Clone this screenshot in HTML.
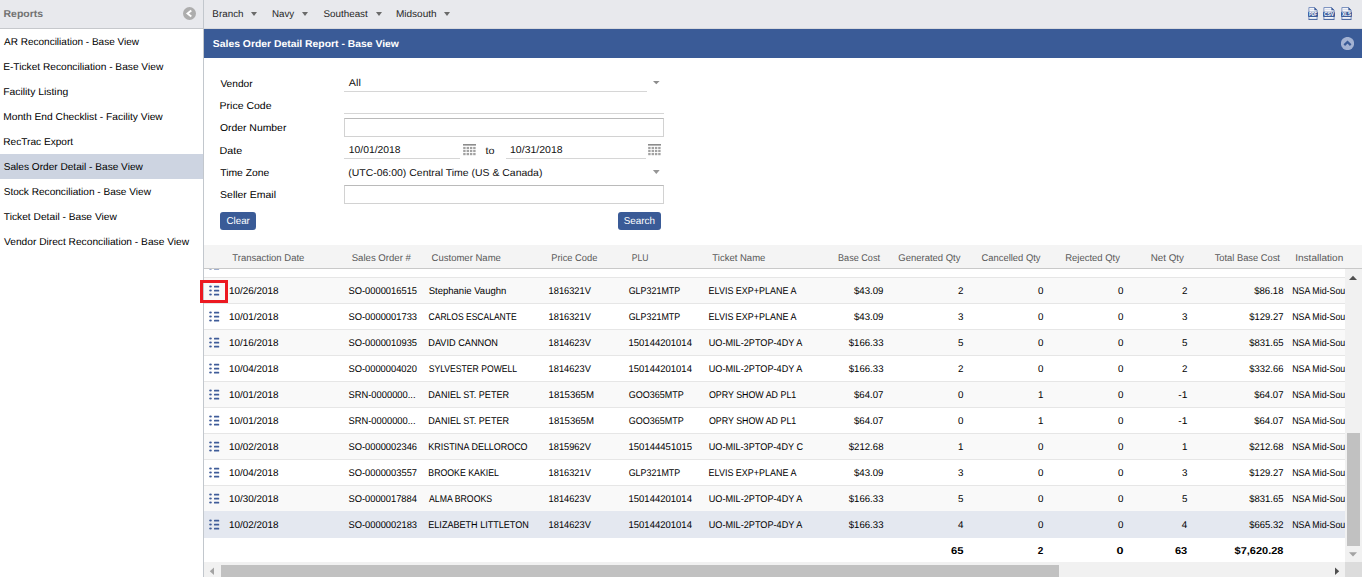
<!DOCTYPE html>
<html><head><meta charset="utf-8">
<style>
*{margin:0;padding:0;box-sizing:border-box}
html,body{width:1362px;height:577px;overflow:hidden;background:#fff;font-family:"Liberation Sans",sans-serif;color:#000}
.a{position:absolute}
#sidehdr{position:absolute;left:0;top:0;width:203px;height:28px;background:#e8e9ed}
#sideline{position:absolute;left:0;top:28px;width:203px;height:1px;background:#c6c8cc}
#sel{position:absolute;left:0;top:154px;width:203px;height:25px;background:#cdd4e1}
#vline{position:absolute;left:203px;top:0;width:1px;height:577px;background:#c2c7cd}
#top{position:absolute;left:204px;top:0;width:1158px;height:29px;background:#e8e9ed;border-bottom:1px solid #d8d9dd}
#blue{position:absolute;left:204px;top:29px;width:1158px;height:29px;background:#3a5b97}
.dd{position:absolute;width:0;height:0;border-left:3px solid transparent;border-right:3px solid transparent;border-top:4px solid #6a6a6a}
.ul{position:absolute;height:1px;background:#d6d6d6}
.box{position:absolute;border:1px solid #d2d2d2;border-top-color:#bababa;background:#fff}
.btn{position:absolute;background:#3a5b97;border-radius:3px;height:18px}
#thead{position:absolute;left:204px;top:245px;width:1158px;height:23px;background:#f4f4f4}
#theadline{position:absolute;left:204px;top:268px;width:1158px;height:1px;background:#c9c9c9}
#tbody{position:absolute;left:204px;top:269px;width:1141px;height:293px;overflow:hidden;background:#fff}
.tr{position:absolute;left:0;width:1141px;height:26px;border-top:1px solid #e6e6e6}
.tr.g{background:#f9f9f9}
.tr.w{background:#fff}
.tr.hl{background:#e4e8f0;border-top-color:#e4e8f0;height:27px}
.ic{position:absolute}
#redbox{position:absolute;left:200px;top:280px;width:28px;height:23px;border:3px solid #ec1921}
#vscroll{position:absolute;left:1345px;top:269px;width:17px;height:293px;background:#f1f1f1}
#vthumb{position:absolute;left:1347px;top:433px;width:13px;height:113px;background:#c1c1c1}
#hscroll{position:absolute;left:204px;top:562px;width:1141px;height:15px;background:#f1f1f1}
#hthumb{position:absolute;left:221px;top:565px;width:838px;height:12px;background:#c1c1c1}
#corner{position:absolute;left:1345px;top:562px;width:17px;height:15px;background:#dcdcdc}
#txt{position:absolute;left:0;top:0}
</style></head><body>
<div id="sidehdr"></div>
<svg class="a" style="left:183px;top:7px" width="13" height="13" viewBox="0 0 13 13"><circle cx="6.5" cy="6.5" r="6.5" fill="#adadad"/><path d="M8.3 3.5 L4.5 6.5 L8.3 9.5" fill="none" stroke="#fff" stroke-width="1.9"/></svg>
<div id="sideline"></div>
<div id="sel"></div>
<div id="vline"></div>
<div id="top"></div>
<div class="dd" style="left:251px;top:12px"></div>
<div class="dd" style="left:302px;top:12px"></div>
<div class="dd" style="left:376px;top:12px"></div>
<div class="dd" style="left:444px;top:12px"></div>
<svg class="a" style="left:1300px;top:0px" width="62" height="28" viewBox="1300 0 62 28"><path d="M1308.9 19.5 V7.5 H1314.3 L1317.1 10.2 V19.5" fill="#f3f4f8" stroke="#7189bb" stroke-width="0.9"/><path d="M1314.3 7 V10.3 H1317.5 Z" fill="#3e5d9b"/><line x1="1309.9" y1="9.5" x2="1313.8" y2="9.5" stroke="#d5dbe8" stroke-width="0.8"/><rect x="1308" y="11.7" width="10" height="5.3" rx="0.9" fill="#3e5d9b"/><text x="1309.0" y="16.2" font-family="Liberation Sans" font-weight="bold" font-size="5.6" fill="#fff" textLength="8.0" lengthAdjust="spacingAndGlyphs">PDF</text><line x1="1308.6" y1="19.4" x2="1317.4" y2="19.4" stroke="#3e5d9b" stroke-width="1"/><path d="M1323.9 19.5 V7.5 H1331.3 L1334.1 10.2 V19.5" fill="#f3f4f8" stroke="#7189bb" stroke-width="0.9"/><path d="M1331.3 7 V10.3 H1334.5 Z" fill="#3e5d9b"/><line x1="1324.9" y1="9.5" x2="1330.8" y2="9.5" stroke="#d5dbe8" stroke-width="0.8"/><rect x="1323" y="11.7" width="12" height="5.3" rx="0.9" fill="#3e5d9b"/><text x="1324.0" y="16.2" font-family="Liberation Sans" font-weight="bold" font-size="5.6" fill="#fff" textLength="10.0" lengthAdjust="spacingAndGlyphs">CSV</text><line x1="1323.6" y1="19.4" x2="1334.4" y2="19.4" stroke="#3e5d9b" stroke-width="1"/><path d="M1341.9 19.5 V7.5 H1348.3 L1351.1 10.2 V19.5" fill="#f3f4f8" stroke="#7189bb" stroke-width="0.9"/><path d="M1348.3 7 V10.3 H1351.5 Z" fill="#3e5d9b"/><line x1="1342.9" y1="9.5" x2="1347.8" y2="9.5" stroke="#d5dbe8" stroke-width="0.8"/><rect x="1341" y="11.7" width="11" height="5.3" rx="0.9" fill="#3e5d9b"/><text x="1342.0" y="16.2" font-family="Liberation Sans" font-weight="bold" font-size="5.6" fill="#fff" textLength="9.0" lengthAdjust="spacingAndGlyphs">XLS</text><line x1="1341.6" y1="19.4" x2="1351.4" y2="19.4" stroke="#3e5d9b" stroke-width="1"/></svg>
<div id="blue"></div>
<svg class="a" style="left:1341px;top:37px" width="13" height="13" viewBox="0 0 13 13"><circle cx="6.5" cy="6.5" r="6.6" fill="#a4b3d3"/><path d="M3.3 8.1 L6.5 5.0 L9.7 8.1" fill="none" stroke="#3a5b97" stroke-width="2.2"/></svg>
<div class="ul" style="left:344px;top:91px;width:303px"></div>
<svg class="a" style="left:652px;top:80px" width="9" height="6" viewBox="0 0 9 6"><path d="M1 1 H7.6 L4.3 4.2 Z" fill="#8c8c8c"/></svg>
<div class="ul" style="left:344px;top:113px;width:320px"></div>
<div class="box" style="left:344px;top:118px;width:320px;height:19px"></div>
<div class="ul" style="left:344px;top:158px;width:116px"></div>
<svg class="a" style="left:463px;top:144px" width="13" height="12" viewBox="0 0 13 12"><rect x="0" y="0" width="13" height="1.6" fill="#8c8c8c"/><rect x="0.2" y="2.9" width="2.4" height="2.2" fill="#a2a2a2"/><rect x="3.6" y="2.9" width="2.4" height="2.2" fill="#a2a2a2"/><rect x="6.9" y="2.9" width="2.4" height="2.2" fill="#a2a2a2"/><rect x="10.2" y="2.9" width="2.4" height="2.2" fill="#a2a2a2"/><rect x="0.2" y="5.9" width="2.4" height="2.2" fill="#a2a2a2"/><rect x="3.6" y="5.9" width="2.4" height="2.2" fill="#a2a2a2"/><rect x="6.9" y="5.9" width="2.4" height="2.2" fill="#a2a2a2"/><rect x="10.2" y="5.9" width="2.4" height="2.2" fill="#a2a2a2"/><rect x="0.2" y="9.0" width="2.4" height="2.2" fill="#a2a2a2"/><rect x="3.6" y="9.0" width="2.4" height="2.2" fill="#a2a2a2"/><rect x="6.9" y="9.0" width="2.4" height="2.2" fill="#a2a2a2"/><rect x="10.2" y="9.0" width="2.4" height="2.2" fill="#a2a2a2"/></svg>
<div class="ul" style="left:506px;top:158px;width:140px"></div>
<svg class="a" style="left:648px;top:144px" width="13" height="12" viewBox="0 0 13 12"><rect x="0" y="0" width="13" height="1.6" fill="#8c8c8c"/><rect x="0.2" y="2.9" width="2.4" height="2.2" fill="#a2a2a2"/><rect x="3.6" y="2.9" width="2.4" height="2.2" fill="#a2a2a2"/><rect x="6.9" y="2.9" width="2.4" height="2.2" fill="#a2a2a2"/><rect x="10.2" y="2.9" width="2.4" height="2.2" fill="#a2a2a2"/><rect x="0.2" y="5.9" width="2.4" height="2.2" fill="#a2a2a2"/><rect x="3.6" y="5.9" width="2.4" height="2.2" fill="#a2a2a2"/><rect x="6.9" y="5.9" width="2.4" height="2.2" fill="#a2a2a2"/><rect x="10.2" y="5.9" width="2.4" height="2.2" fill="#a2a2a2"/><rect x="0.2" y="9.0" width="2.4" height="2.2" fill="#a2a2a2"/><rect x="3.6" y="9.0" width="2.4" height="2.2" fill="#a2a2a2"/><rect x="6.9" y="9.0" width="2.4" height="2.2" fill="#a2a2a2"/><rect x="10.2" y="9.0" width="2.4" height="2.2" fill="#a2a2a2"/></svg>
<svg class="a" style="left:652px;top:169px" width="9" height="7" viewBox="0 0 9 7"><path d="M0.9 1 H7.7 L4.3 5 Z" fill="#969696"/></svg>
<div class="box" style="left:344px;top:185px;width:320px;height:19px"></div>
<div class="btn" style="left:220px;top:212px;width:36px"></div>
<div class="btn" style="left:618px;top:212px;width:43px"></div>
<div id="thead"></div><div id="theadline"></div>
<div id="tbody">
<div class="tr w" style="top:-18px"></div>
<svg class="ic" style="left:5px;top:-10px" width="12" height="12" viewBox="0 0 12 12"><ellipse cx="1.5" cy="1.6" rx="1.35" ry="1.0" fill="#3f5c99"/><rect x="5" y="0.7" width="5.2" height="1.8" rx="0.5" fill="#3f5c99"/><ellipse cx="1.5" cy="5.6" rx="1.35" ry="1.0" fill="#3f5c99"/><rect x="5" y="4.7" width="5.2" height="1.8" rx="0.5" fill="#3f5c99"/><ellipse cx="1.5" cy="9.6" rx="1.35" ry="1.0" fill="#3f5c99"/><rect x="5" y="8.7" width="5.2" height="1.8" rx="0.5" fill="#3f5c99"/></svg>
<div class="tr g" style="top:8px"></div>
<svg class="ic" style="left:5px;top:16px" width="12" height="12" viewBox="0 0 12 12"><ellipse cx="1.5" cy="1.6" rx="1.35" ry="1.0" fill="#3f5c99"/><rect x="5" y="0.7" width="5.2" height="1.8" rx="0.5" fill="#3f5c99"/><ellipse cx="1.5" cy="5.6" rx="1.35" ry="1.0" fill="#3f5c99"/><rect x="5" y="4.7" width="5.2" height="1.8" rx="0.5" fill="#3f5c99"/><ellipse cx="1.5" cy="9.6" rx="1.35" ry="1.0" fill="#3f5c99"/><rect x="5" y="8.7" width="5.2" height="1.8" rx="0.5" fill="#3f5c99"/></svg>
<div class="tr w" style="top:34px"></div>
<svg class="ic" style="left:5px;top:42px" width="12" height="12" viewBox="0 0 12 12"><ellipse cx="1.5" cy="1.6" rx="1.35" ry="1.0" fill="#3f5c99"/><rect x="5" y="0.7" width="5.2" height="1.8" rx="0.5" fill="#3f5c99"/><ellipse cx="1.5" cy="5.6" rx="1.35" ry="1.0" fill="#3f5c99"/><rect x="5" y="4.7" width="5.2" height="1.8" rx="0.5" fill="#3f5c99"/><ellipse cx="1.5" cy="9.6" rx="1.35" ry="1.0" fill="#3f5c99"/><rect x="5" y="8.7" width="5.2" height="1.8" rx="0.5" fill="#3f5c99"/></svg>
<div class="tr g" style="top:60px"></div>
<svg class="ic" style="left:5px;top:68px" width="12" height="12" viewBox="0 0 12 12"><ellipse cx="1.5" cy="1.6" rx="1.35" ry="1.0" fill="#3f5c99"/><rect x="5" y="0.7" width="5.2" height="1.8" rx="0.5" fill="#3f5c99"/><ellipse cx="1.5" cy="5.6" rx="1.35" ry="1.0" fill="#3f5c99"/><rect x="5" y="4.7" width="5.2" height="1.8" rx="0.5" fill="#3f5c99"/><ellipse cx="1.5" cy="9.6" rx="1.35" ry="1.0" fill="#3f5c99"/><rect x="5" y="8.7" width="5.2" height="1.8" rx="0.5" fill="#3f5c99"/></svg>
<div class="tr w" style="top:86px"></div>
<svg class="ic" style="left:5px;top:94px" width="12" height="12" viewBox="0 0 12 12"><ellipse cx="1.5" cy="1.6" rx="1.35" ry="1.0" fill="#3f5c99"/><rect x="5" y="0.7" width="5.2" height="1.8" rx="0.5" fill="#3f5c99"/><ellipse cx="1.5" cy="5.6" rx="1.35" ry="1.0" fill="#3f5c99"/><rect x="5" y="4.7" width="5.2" height="1.8" rx="0.5" fill="#3f5c99"/><ellipse cx="1.5" cy="9.6" rx="1.35" ry="1.0" fill="#3f5c99"/><rect x="5" y="8.7" width="5.2" height="1.8" rx="0.5" fill="#3f5c99"/></svg>
<div class="tr g" style="top:112px"></div>
<svg class="ic" style="left:5px;top:120px" width="12" height="12" viewBox="0 0 12 12"><ellipse cx="1.5" cy="1.6" rx="1.35" ry="1.0" fill="#3f5c99"/><rect x="5" y="0.7" width="5.2" height="1.8" rx="0.5" fill="#3f5c99"/><ellipse cx="1.5" cy="5.6" rx="1.35" ry="1.0" fill="#3f5c99"/><rect x="5" y="4.7" width="5.2" height="1.8" rx="0.5" fill="#3f5c99"/><ellipse cx="1.5" cy="9.6" rx="1.35" ry="1.0" fill="#3f5c99"/><rect x="5" y="8.7" width="5.2" height="1.8" rx="0.5" fill="#3f5c99"/></svg>
<div class="tr w" style="top:138px"></div>
<svg class="ic" style="left:5px;top:146px" width="12" height="12" viewBox="0 0 12 12"><ellipse cx="1.5" cy="1.6" rx="1.35" ry="1.0" fill="#3f5c99"/><rect x="5" y="0.7" width="5.2" height="1.8" rx="0.5" fill="#3f5c99"/><ellipse cx="1.5" cy="5.6" rx="1.35" ry="1.0" fill="#3f5c99"/><rect x="5" y="4.7" width="5.2" height="1.8" rx="0.5" fill="#3f5c99"/><ellipse cx="1.5" cy="9.6" rx="1.35" ry="1.0" fill="#3f5c99"/><rect x="5" y="8.7" width="5.2" height="1.8" rx="0.5" fill="#3f5c99"/></svg>
<div class="tr g" style="top:164px"></div>
<svg class="ic" style="left:5px;top:172px" width="12" height="12" viewBox="0 0 12 12"><ellipse cx="1.5" cy="1.6" rx="1.35" ry="1.0" fill="#3f5c99"/><rect x="5" y="0.7" width="5.2" height="1.8" rx="0.5" fill="#3f5c99"/><ellipse cx="1.5" cy="5.6" rx="1.35" ry="1.0" fill="#3f5c99"/><rect x="5" y="4.7" width="5.2" height="1.8" rx="0.5" fill="#3f5c99"/><ellipse cx="1.5" cy="9.6" rx="1.35" ry="1.0" fill="#3f5c99"/><rect x="5" y="8.7" width="5.2" height="1.8" rx="0.5" fill="#3f5c99"/></svg>
<div class="tr w" style="top:190px"></div>
<svg class="ic" style="left:5px;top:198px" width="12" height="12" viewBox="0 0 12 12"><ellipse cx="1.5" cy="1.6" rx="1.35" ry="1.0" fill="#3f5c99"/><rect x="5" y="0.7" width="5.2" height="1.8" rx="0.5" fill="#3f5c99"/><ellipse cx="1.5" cy="5.6" rx="1.35" ry="1.0" fill="#3f5c99"/><rect x="5" y="4.7" width="5.2" height="1.8" rx="0.5" fill="#3f5c99"/><ellipse cx="1.5" cy="9.6" rx="1.35" ry="1.0" fill="#3f5c99"/><rect x="5" y="8.7" width="5.2" height="1.8" rx="0.5" fill="#3f5c99"/></svg>
<div class="tr g" style="top:216px"></div>
<svg class="ic" style="left:5px;top:224px" width="12" height="12" viewBox="0 0 12 12"><ellipse cx="1.5" cy="1.6" rx="1.35" ry="1.0" fill="#3f5c99"/><rect x="5" y="0.7" width="5.2" height="1.8" rx="0.5" fill="#3f5c99"/><ellipse cx="1.5" cy="5.6" rx="1.35" ry="1.0" fill="#3f5c99"/><rect x="5" y="4.7" width="5.2" height="1.8" rx="0.5" fill="#3f5c99"/><ellipse cx="1.5" cy="9.6" rx="1.35" ry="1.0" fill="#3f5c99"/><rect x="5" y="8.7" width="5.2" height="1.8" rx="0.5" fill="#3f5c99"/></svg>
<div class="tr hl" style="top:242px"></div>
<svg class="ic" style="left:5px;top:250px" width="12" height="12" viewBox="0 0 12 12"><ellipse cx="1.5" cy="1.6" rx="1.35" ry="1.0" fill="#3f5c99"/><rect x="5" y="0.7" width="5.2" height="1.8" rx="0.5" fill="#3f5c99"/><ellipse cx="1.5" cy="5.6" rx="1.35" ry="1.0" fill="#3f5c99"/><rect x="5" y="4.7" width="5.2" height="1.8" rx="0.5" fill="#3f5c99"/><ellipse cx="1.5" cy="9.6" rx="1.35" ry="1.0" fill="#3f5c99"/><rect x="5" y="8.7" width="5.2" height="1.8" rx="0.5" fill="#3f5c99"/></svg>
</div>
<div id="redbox"></div>
<svg id="txt" width="1362" height="577" viewBox="0 0 1362 577" font-family="Liberation Sans" font-size="10" text-rendering="geometricPrecision" xml:space="preserve"><defs><clipPath id="tbc"><rect x="204" y="269" width="1141" height="293"/></clipPath></defs>
<text x="4.00" y="45.00" textLength="135.08" lengthAdjust="spacingAndGlyphs">AR Reconciliation - Base View</text>
<text x="3.20" y="70.00" textLength="160.07" lengthAdjust="spacingAndGlyphs">E-Ticket Reconciliation - Base View</text>
<text x="3.19" y="95.00" textLength="64.99" lengthAdjust="spacingAndGlyphs">Facility Listing</text>
<text x="3.20" y="120.00" textLength="159.57" lengthAdjust="spacingAndGlyphs">Month End Checklist - Facility View</text>
<text x="3.21" y="145.00" textLength="69.96" lengthAdjust="spacingAndGlyphs">RecTrac Export</text>
<text x="3.68" y="170.00" textLength="139.19" lengthAdjust="spacingAndGlyphs">Sales Order Detail - Base View</text>
<text x="3.68" y="195.00" textLength="147.29" lengthAdjust="spacingAndGlyphs">Stock Reconciliation - Base View</text>
<text x="3.84" y="220.00" textLength="113.03" lengthAdjust="spacingAndGlyphs">Ticket Detail - Base View</text>
<text x="4.00" y="245.00" textLength="185.08" lengthAdjust="spacingAndGlyphs">Vendor Direct Reconciliation - Base View</text>
<text x="3.55" y="17.00" textLength="39.58" lengthAdjust="spacingAndGlyphs" font-weight="bold" fill="#727272">Reports</text>
<text x="212.33" y="17.00" textLength="31.22" lengthAdjust="spacingAndGlyphs" font-size="9.8" fill="#262626">Branch</text>
<text x="271.94" y="17.00" textLength="22.26" lengthAdjust="spacingAndGlyphs" font-size="9.8" fill="#262626">Navy</text>
<text x="323.49" y="17.00" textLength="44.27" lengthAdjust="spacingAndGlyphs" font-size="9.8" fill="#262626">Southeast</text>
<text x="395.92" y="17.00" textLength="40.75" lengthAdjust="spacingAndGlyphs" font-size="9.8" fill="#262626">Midsouth</text>
<text x="212.84" y="47.00" textLength="186.03" lengthAdjust="spacingAndGlyphs" font-weight="bold" fill="#fff">Sales Order Detail Report - Base View</text>
<text x="220.40" y="87.00" textLength="32.25" lengthAdjust="spacingAndGlyphs">Vendor</text>
<text x="219.58" y="109.00" textLength="51.95" lengthAdjust="spacingAndGlyphs">Price Code</text>
<text x="219.91" y="131.00" textLength="66.44" lengthAdjust="spacingAndGlyphs">Order Number</text>
<text x="219.56" y="154.00" textLength="22.67" lengthAdjust="spacingAndGlyphs">Date</text>
<text x="220.24" y="176.00" textLength="49.08" lengthAdjust="spacingAndGlyphs">Time Zone</text>
<text x="220.07" y="198.00" textLength="55.92" lengthAdjust="spacingAndGlyphs">Seller Email</text>
<text x="348.85" y="86.00" textLength="11.96" lengthAdjust="spacingAndGlyphs" fill="#111">All</text>
<text x="348.85" y="153.00" textLength="51.77" lengthAdjust="spacingAndGlyphs" fill="#111">10/01/2018</text>
<text x="485.40" y="154.00" textLength="9.04" lengthAdjust="spacingAndGlyphs" fill="#111">to</text>
<text x="510.04" y="153.00" textLength="52.58" lengthAdjust="spacingAndGlyphs" fill="#111">10/31/2018</text>
<text x="348.21" y="176.00" textLength="194.23" lengthAdjust="spacingAndGlyphs" fill="#111">(UTC-06:00) Central Time (US &amp; Canada)</text>
<text x="226.44" y="224.00" textLength="23.41" lengthAdjust="spacingAndGlyphs" fill="#fff">Clear</text>
<text x="623.69" y="224.00" textLength="31.26" lengthAdjust="spacingAndGlyphs" fill="#fff">Search</text>
<text x="232.35" y="261.00" textLength="72.03" lengthAdjust="spacingAndGlyphs" font-size="9.8" fill="#595959">Transaction Date</text>
<text x="351.70" y="261.00" textLength="59.24" lengthAdjust="spacingAndGlyphs" font-size="9.8" fill="#595959">Sales Order #</text>
<text x="431.55" y="261.00" textLength="69.33" lengthAdjust="spacingAndGlyphs" font-size="9.8" fill="#595959">Customer Name</text>
<text x="551.27" y="261.00" textLength="46.11" lengthAdjust="spacingAndGlyphs" font-size="9.8" fill="#595959">Price Code</text>
<text x="631.83" y="261.00" textLength="16.74" lengthAdjust="spacingAndGlyphs" font-size="9.8" fill="#595959">PLU</text>
<text x="712.35" y="261.00" textLength="53.03" lengthAdjust="spacingAndGlyphs" font-size="9.8" fill="#595959">Ticket Name</text>
<text x="838.04" y="261.00" textLength="41.93" lengthAdjust="spacingAndGlyphs" font-size="9.8" fill="#595959">Base Cost</text>
<text x="898.31" y="261.00" textLength="62.19" lengthAdjust="spacingAndGlyphs" font-size="9.8" fill="#595959">Generated Qty</text>
<text x="981.56" y="261.00" textLength="58.94" lengthAdjust="spacingAndGlyphs" font-size="9.8" fill="#595959">Cancelled Qty</text>
<text x="1065.26" y="261.00" textLength="54.74" lengthAdjust="spacingAndGlyphs" font-size="9.8" fill="#595959">Rejected Qty</text>
<text x="1150.73" y="261.00" textLength="33.27" lengthAdjust="spacingAndGlyphs" font-size="9.8" fill="#595959">Net Qty</text>
<text x="1214.65" y="261.00" textLength="65.31" lengthAdjust="spacingAndGlyphs" font-size="9.8" fill="#595959">Total Base Cost</text>
<text x="1295.21" y="261.00" textLength="48.05" lengthAdjust="spacingAndGlyphs" font-size="9.8" fill="#595959">Installation</text>
<text x="950.95" y="554.00" textLength="12.53" lengthAdjust="spacingAndGlyphs" font-weight="bold">65</text>
<text x="1037.79" y="554.00" textLength="5.56" lengthAdjust="spacingAndGlyphs" font-weight="bold">2</text>
<text x="1116.61" y="554.00" textLength="7.00" lengthAdjust="spacingAndGlyphs" font-weight="bold">0</text>
<text x="1174.95" y="554.00" textLength="12.32" lengthAdjust="spacingAndGlyphs" font-weight="bold">63</text>
<text x="1234.60" y="554.00" textLength="48.87" lengthAdjust="spacingAndGlyphs" font-weight="bold">$7,620.28</text>
<g clip-path="url(#tbc)">
<text x="228.98" y="268.00" textLength="49.42" lengthAdjust="spacingAndGlyphs" font-size="9.8">10/02/2018</text>
<text x="348.41" y="268.00" textLength="68.67" lengthAdjust="spacingAndGlyphs" font-size="9.8">SO-0000002183</text>
<text x="428.29" y="268.00" textLength="100.55" lengthAdjust="spacingAndGlyphs" font-size="9.8">ELIZABETH LITTLETON</text>
<text x="548.62" y="268.00" textLength="42.23" lengthAdjust="spacingAndGlyphs" font-size="9.8">1814623V</text>
<text x="628.51" y="268.00" textLength="63.43" lengthAdjust="spacingAndGlyphs" font-size="9.8">150144201014</text>
<text x="708.73" y="268.00" textLength="93.62" lengthAdjust="spacingAndGlyphs" font-size="9.8">UO-MIL-2PTOP-4DY A</text>
<text x="848.75" y="268.00" textLength="34.74" lengthAdjust="spacingAndGlyphs" font-size="9.8">$166.33</text>
<text x="957.89" y="268.00" textLength="5.45" lengthAdjust="spacingAndGlyphs" font-size="9.8">4</text>
<text x="1037.89" y="268.00" textLength="5.45" lengthAdjust="spacingAndGlyphs" font-size="9.8">0</text>
<text x="1117.89" y="268.00" textLength="5.45" lengthAdjust="spacingAndGlyphs" font-size="9.8">0</text>
<text x="1181.79" y="268.00" textLength="5.45" lengthAdjust="spacingAndGlyphs" font-size="9.8">4</text>
<text x="1249.20" y="268.00" textLength="34.28" lengthAdjust="spacingAndGlyphs" font-size="9.8">$665.32</text>
<text x="1292.21" y="268.00" textLength="60.45" lengthAdjust="spacingAndGlyphs" font-size="9.8">NSA Mid-South</text>
<text x="228.98" y="294.00" textLength="49.42" lengthAdjust="spacingAndGlyphs" font-size="9.8">10/26/2018</text>
<text x="348.41" y="294.00" textLength="68.67" lengthAdjust="spacingAndGlyphs" font-size="9.8">SO-0000016515</text>
<text x="428.70" y="294.00" textLength="77.63" lengthAdjust="spacingAndGlyphs" font-size="9.8">Stephanie Vaughn</text>
<text x="548.62" y="294.00" textLength="42.23" lengthAdjust="spacingAndGlyphs" font-size="9.8">1816321V</text>
<text x="628.68" y="294.00" textLength="51.59" lengthAdjust="spacingAndGlyphs" font-size="9.8">GLP321MTP</text>
<text x="708.60" y="294.00" textLength="87.85" lengthAdjust="spacingAndGlyphs" font-size="9.8">ELVIS EXP+PLANE A</text>
<text x="853.95" y="294.00" textLength="29.54" lengthAdjust="spacingAndGlyphs" font-size="9.8">$43.09</text>
<text x="958.05" y="294.00" textLength="5.45" lengthAdjust="spacingAndGlyphs" font-size="9.8">2</text>
<text x="1037.89" y="294.00" textLength="5.45" lengthAdjust="spacingAndGlyphs" font-size="9.8">0</text>
<text x="1117.89" y="294.00" textLength="5.45" lengthAdjust="spacingAndGlyphs" font-size="9.8">0</text>
<text x="1181.95" y="294.00" textLength="5.45" lengthAdjust="spacingAndGlyphs" font-size="9.8">2</text>
<text x="1254.20" y="294.00" textLength="29.29" lengthAdjust="spacingAndGlyphs" font-size="9.8">$86.18</text>
<text x="1292.21" y="294.00" textLength="60.45" lengthAdjust="spacingAndGlyphs" font-size="9.8">NSA Mid-South</text>
<text x="228.98" y="320.00" textLength="49.42" lengthAdjust="spacingAndGlyphs" font-size="9.8">10/01/2018</text>
<text x="348.41" y="320.00" textLength="68.67" lengthAdjust="spacingAndGlyphs" font-size="9.8">SO-0000001733</text>
<text x="428.60" y="320.00" textLength="88.06" lengthAdjust="spacingAndGlyphs" font-size="9.8">CARLOS ESCALANTE</text>
<text x="548.62" y="320.00" textLength="42.23" lengthAdjust="spacingAndGlyphs" font-size="9.8">1816321V</text>
<text x="628.68" y="320.00" textLength="51.59" lengthAdjust="spacingAndGlyphs" font-size="9.8">GLP321MTP</text>
<text x="708.60" y="320.00" textLength="87.85" lengthAdjust="spacingAndGlyphs" font-size="9.8">ELVIS EXP+PLANE A</text>
<text x="853.95" y="320.00" textLength="29.54" lengthAdjust="spacingAndGlyphs" font-size="9.8">$43.09</text>
<text x="958.05" y="320.00" textLength="5.45" lengthAdjust="spacingAndGlyphs" font-size="9.8">3</text>
<text x="1037.89" y="320.00" textLength="5.45" lengthAdjust="spacingAndGlyphs" font-size="9.8">0</text>
<text x="1117.89" y="320.00" textLength="5.45" lengthAdjust="spacingAndGlyphs" font-size="9.8">0</text>
<text x="1181.95" y="320.00" textLength="5.45" lengthAdjust="spacingAndGlyphs" font-size="9.8">3</text>
<text x="1249.20" y="320.00" textLength="34.28" lengthAdjust="spacingAndGlyphs" font-size="9.8">$129.27</text>
<text x="1292.21" y="320.00" textLength="60.45" lengthAdjust="spacingAndGlyphs" font-size="9.8">NSA Mid-South</text>
<text x="228.98" y="346.00" textLength="49.42" lengthAdjust="spacingAndGlyphs" font-size="9.8">10/16/2018</text>
<text x="348.41" y="346.00" textLength="68.67" lengthAdjust="spacingAndGlyphs" font-size="9.8">SO-0000010935</text>
<text x="428.28" y="346.00" textLength="69.66" lengthAdjust="spacingAndGlyphs" font-size="9.8">DAVID CANNON</text>
<text x="548.62" y="346.00" textLength="42.23" lengthAdjust="spacingAndGlyphs" font-size="9.8">1814623V</text>
<text x="628.51" y="346.00" textLength="63.43" lengthAdjust="spacingAndGlyphs" font-size="9.8">150144201014</text>
<text x="708.73" y="346.00" textLength="93.62" lengthAdjust="spacingAndGlyphs" font-size="9.8">UO-MIL-2PTOP-4DY A</text>
<text x="848.75" y="346.00" textLength="34.74" lengthAdjust="spacingAndGlyphs" font-size="9.8">$166.33</text>
<text x="958.05" y="346.00" textLength="5.45" lengthAdjust="spacingAndGlyphs" font-size="9.8">5</text>
<text x="1037.89" y="346.00" textLength="5.45" lengthAdjust="spacingAndGlyphs" font-size="9.8">0</text>
<text x="1117.89" y="346.00" textLength="5.45" lengthAdjust="spacingAndGlyphs" font-size="9.8">0</text>
<text x="1181.95" y="346.00" textLength="5.45" lengthAdjust="spacingAndGlyphs" font-size="9.8">5</text>
<text x="1249.20" y="346.00" textLength="34.28" lengthAdjust="spacingAndGlyphs" font-size="9.8">$831.65</text>
<text x="1292.21" y="346.00" textLength="60.45" lengthAdjust="spacingAndGlyphs" font-size="9.8">NSA Mid-South</text>
<text x="228.98" y="372.00" textLength="49.42" lengthAdjust="spacingAndGlyphs" font-size="9.8">10/04/2018</text>
<text x="348.41" y="372.00" textLength="68.52" lengthAdjust="spacingAndGlyphs" font-size="9.8">SO-0000004020</text>
<text x="428.73" y="372.00" textLength="88.38" lengthAdjust="spacingAndGlyphs" font-size="9.8">SYLVESTER POWELL</text>
<text x="548.62" y="372.00" textLength="42.23" lengthAdjust="spacingAndGlyphs" font-size="9.8">1814623V</text>
<text x="628.51" y="372.00" textLength="63.43" lengthAdjust="spacingAndGlyphs" font-size="9.8">150144201014</text>
<text x="708.73" y="372.00" textLength="93.62" lengthAdjust="spacingAndGlyphs" font-size="9.8">UO-MIL-2PTOP-4DY A</text>
<text x="848.75" y="372.00" textLength="34.74" lengthAdjust="spacingAndGlyphs" font-size="9.8">$166.33</text>
<text x="958.05" y="372.00" textLength="5.45" lengthAdjust="spacingAndGlyphs" font-size="9.8">2</text>
<text x="1037.89" y="372.00" textLength="5.45" lengthAdjust="spacingAndGlyphs" font-size="9.8">0</text>
<text x="1117.89" y="372.00" textLength="5.45" lengthAdjust="spacingAndGlyphs" font-size="9.8">0</text>
<text x="1181.95" y="372.00" textLength="5.45" lengthAdjust="spacingAndGlyphs" font-size="9.8">2</text>
<text x="1249.20" y="372.00" textLength="34.28" lengthAdjust="spacingAndGlyphs" font-size="9.8">$332.66</text>
<text x="1292.21" y="372.00" textLength="60.45" lengthAdjust="spacingAndGlyphs" font-size="9.8">NSA Mid-South</text>
<text x="228.98" y="398.00" textLength="49.42" lengthAdjust="spacingAndGlyphs" font-size="9.8">10/01/2018</text>
<text x="348.51" y="398.00" textLength="67.04" lengthAdjust="spacingAndGlyphs" font-size="9.8">SRN-0000000...</text>
<text x="428.30" y="398.00" textLength="80.72" lengthAdjust="spacingAndGlyphs" font-size="9.8">DANIEL ST. PETER</text>
<text x="548.60" y="398.00" textLength="45.35" lengthAdjust="spacingAndGlyphs" font-size="9.8">1815365M</text>
<text x="628.68" y="398.00" textLength="55.10" lengthAdjust="spacingAndGlyphs" font-size="9.8">GOO365MTP</text>
<text x="708.89" y="398.00" textLength="87.37" lengthAdjust="spacingAndGlyphs" font-size="9.8">OPRY SHOW AD PL1</text>
<text x="853.95" y="398.00" textLength="29.54" lengthAdjust="spacingAndGlyphs" font-size="9.8">$64.07</text>
<text x="957.89" y="398.00" textLength="5.45" lengthAdjust="spacingAndGlyphs" font-size="9.8">0</text>
<text x="1038.05" y="398.00" textLength="5.45" lengthAdjust="spacingAndGlyphs" font-size="9.8">1</text>
<text x="1117.89" y="398.00" textLength="5.45" lengthAdjust="spacingAndGlyphs" font-size="9.8">0</text>
<text x="1178.28" y="398.00" textLength="9.14" lengthAdjust="spacingAndGlyphs" font-size="9.8">-1</text>
<text x="1254.20" y="398.00" textLength="29.29" lengthAdjust="spacingAndGlyphs" font-size="9.8">$64.07</text>
<text x="1292.21" y="398.00" textLength="60.45" lengthAdjust="spacingAndGlyphs" font-size="9.8">NSA Mid-South</text>
<text x="228.98" y="424.00" textLength="49.42" lengthAdjust="spacingAndGlyphs" font-size="9.8">10/01/2018</text>
<text x="348.51" y="424.00" textLength="67.04" lengthAdjust="spacingAndGlyphs" font-size="9.8">SRN-0000000...</text>
<text x="428.30" y="424.00" textLength="80.72" lengthAdjust="spacingAndGlyphs" font-size="9.8">DANIEL ST. PETER</text>
<text x="548.60" y="424.00" textLength="45.35" lengthAdjust="spacingAndGlyphs" font-size="9.8">1815365M</text>
<text x="628.68" y="424.00" textLength="55.10" lengthAdjust="spacingAndGlyphs" font-size="9.8">GOO365MTP</text>
<text x="708.89" y="424.00" textLength="87.37" lengthAdjust="spacingAndGlyphs" font-size="9.8">OPRY SHOW AD PL1</text>
<text x="853.95" y="424.00" textLength="29.54" lengthAdjust="spacingAndGlyphs" font-size="9.8">$64.07</text>
<text x="957.89" y="424.00" textLength="5.45" lengthAdjust="spacingAndGlyphs" font-size="9.8">0</text>
<text x="1038.05" y="424.00" textLength="5.45" lengthAdjust="spacingAndGlyphs" font-size="9.8">1</text>
<text x="1117.89" y="424.00" textLength="5.45" lengthAdjust="spacingAndGlyphs" font-size="9.8">0</text>
<text x="1178.28" y="424.00" textLength="9.14" lengthAdjust="spacingAndGlyphs" font-size="9.8">-1</text>
<text x="1254.20" y="424.00" textLength="29.29" lengthAdjust="spacingAndGlyphs" font-size="9.8">$64.07</text>
<text x="1292.21" y="424.00" textLength="60.45" lengthAdjust="spacingAndGlyphs" font-size="9.8">NSA Mid-South</text>
<text x="228.98" y="450.00" textLength="49.42" lengthAdjust="spacingAndGlyphs" font-size="9.8">10/02/2018</text>
<text x="348.41" y="450.00" textLength="68.67" lengthAdjust="spacingAndGlyphs" font-size="9.8">SO-0000002346</text>
<text x="428.31" y="450.00" textLength="99.28" lengthAdjust="spacingAndGlyphs" font-size="9.8">KRISTINA DELLOROCO</text>
<text x="548.62" y="450.00" textLength="42.23" lengthAdjust="spacingAndGlyphs" font-size="9.8">1815962V</text>
<text x="628.50" y="450.00" textLength="63.58" lengthAdjust="spacingAndGlyphs" font-size="9.8">150144451015</text>
<text x="708.73" y="450.00" textLength="94.28" lengthAdjust="spacingAndGlyphs" font-size="9.8">UO-MIL-3PTOP-4DY C</text>
<text x="848.75" y="450.00" textLength="34.74" lengthAdjust="spacingAndGlyphs" font-size="9.8">$212.68</text>
<text x="958.05" y="450.00" textLength="5.45" lengthAdjust="spacingAndGlyphs" font-size="9.8">1</text>
<text x="1037.89" y="450.00" textLength="5.45" lengthAdjust="spacingAndGlyphs" font-size="9.8">0</text>
<text x="1117.89" y="450.00" textLength="5.45" lengthAdjust="spacingAndGlyphs" font-size="9.8">0</text>
<text x="1181.95" y="450.00" textLength="5.45" lengthAdjust="spacingAndGlyphs" font-size="9.8">1</text>
<text x="1249.20" y="450.00" textLength="34.28" lengthAdjust="spacingAndGlyphs" font-size="9.8">$212.68</text>
<text x="1292.21" y="450.00" textLength="60.45" lengthAdjust="spacingAndGlyphs" font-size="9.8">NSA Mid-South</text>
<text x="228.98" y="476.00" textLength="49.42" lengthAdjust="spacingAndGlyphs" font-size="9.8">10/04/2018</text>
<text x="348.41" y="476.00" textLength="68.67" lengthAdjust="spacingAndGlyphs" font-size="9.8">SO-0000003557</text>
<text x="428.32" y="476.00" textLength="70.60" lengthAdjust="spacingAndGlyphs" font-size="9.8">BROOKE KAKIEL</text>
<text x="548.62" y="476.00" textLength="42.23" lengthAdjust="spacingAndGlyphs" font-size="9.8">1816321V</text>
<text x="628.68" y="476.00" textLength="51.59" lengthAdjust="spacingAndGlyphs" font-size="9.8">GLP321MTP</text>
<text x="708.60" y="476.00" textLength="87.85" lengthAdjust="spacingAndGlyphs" font-size="9.8">ELVIS EXP+PLANE A</text>
<text x="853.95" y="476.00" textLength="29.54" lengthAdjust="spacingAndGlyphs" font-size="9.8">$43.09</text>
<text x="958.05" y="476.00" textLength="5.45" lengthAdjust="spacingAndGlyphs" font-size="9.8">3</text>
<text x="1037.89" y="476.00" textLength="5.45" lengthAdjust="spacingAndGlyphs" font-size="9.8">0</text>
<text x="1117.89" y="476.00" textLength="5.45" lengthAdjust="spacingAndGlyphs" font-size="9.8">0</text>
<text x="1181.95" y="476.00" textLength="5.45" lengthAdjust="spacingAndGlyphs" font-size="9.8">3</text>
<text x="1249.20" y="476.00" textLength="34.28" lengthAdjust="spacingAndGlyphs" font-size="9.8">$129.27</text>
<text x="1292.21" y="476.00" textLength="60.45" lengthAdjust="spacingAndGlyphs" font-size="9.8">NSA Mid-South</text>
<text x="228.98" y="502.00" textLength="49.42" lengthAdjust="spacingAndGlyphs" font-size="9.8">10/30/2018</text>
<text x="348.41" y="502.00" textLength="68.52" lengthAdjust="spacingAndGlyphs" font-size="9.8">SO-0000017884</text>
<text x="429.00" y="502.00" textLength="63.06" lengthAdjust="spacingAndGlyphs" font-size="9.8">ALMA BROOKS</text>
<text x="548.62" y="502.00" textLength="42.23" lengthAdjust="spacingAndGlyphs" font-size="9.8">1814623V</text>
<text x="628.51" y="502.00" textLength="63.43" lengthAdjust="spacingAndGlyphs" font-size="9.8">150144201014</text>
<text x="708.73" y="502.00" textLength="93.62" lengthAdjust="spacingAndGlyphs" font-size="9.8">UO-MIL-2PTOP-4DY A</text>
<text x="848.75" y="502.00" textLength="34.74" lengthAdjust="spacingAndGlyphs" font-size="9.8">$166.33</text>
<text x="958.05" y="502.00" textLength="5.45" lengthAdjust="spacingAndGlyphs" font-size="9.8">5</text>
<text x="1037.89" y="502.00" textLength="5.45" lengthAdjust="spacingAndGlyphs" font-size="9.8">0</text>
<text x="1117.89" y="502.00" textLength="5.45" lengthAdjust="spacingAndGlyphs" font-size="9.8">0</text>
<text x="1181.95" y="502.00" textLength="5.45" lengthAdjust="spacingAndGlyphs" font-size="9.8">5</text>
<text x="1249.20" y="502.00" textLength="34.28" lengthAdjust="spacingAndGlyphs" font-size="9.8">$831.65</text>
<text x="1292.21" y="502.00" textLength="60.45" lengthAdjust="spacingAndGlyphs" font-size="9.8">NSA Mid-South</text>
<text x="228.98" y="528.00" textLength="49.42" lengthAdjust="spacingAndGlyphs" font-size="9.8">10/02/2018</text>
<text x="348.41" y="528.00" textLength="68.67" lengthAdjust="spacingAndGlyphs" font-size="9.8">SO-0000002183</text>
<text x="428.29" y="528.00" textLength="100.55" lengthAdjust="spacingAndGlyphs" font-size="9.8">ELIZABETH LITTLETON</text>
<text x="548.62" y="528.00" textLength="42.23" lengthAdjust="spacingAndGlyphs" font-size="9.8">1814623V</text>
<text x="628.51" y="528.00" textLength="63.43" lengthAdjust="spacingAndGlyphs" font-size="9.8">150144201014</text>
<text x="708.73" y="528.00" textLength="93.62" lengthAdjust="spacingAndGlyphs" font-size="9.8">UO-MIL-2PTOP-4DY A</text>
<text x="848.75" y="528.00" textLength="34.74" lengthAdjust="spacingAndGlyphs" font-size="9.8">$166.33</text>
<text x="957.89" y="528.00" textLength="5.45" lengthAdjust="spacingAndGlyphs" font-size="9.8">4</text>
<text x="1037.89" y="528.00" textLength="5.45" lengthAdjust="spacingAndGlyphs" font-size="9.8">0</text>
<text x="1117.89" y="528.00" textLength="5.45" lengthAdjust="spacingAndGlyphs" font-size="9.8">0</text>
<text x="1181.79" y="528.00" textLength="5.45" lengthAdjust="spacingAndGlyphs" font-size="9.8">4</text>
<text x="1249.20" y="528.00" textLength="34.28" lengthAdjust="spacingAndGlyphs" font-size="9.8">$665.32</text>
<text x="1292.21" y="528.00" textLength="60.45" lengthAdjust="spacingAndGlyphs" font-size="9.8">NSA Mid-South</text>
</g></svg>
<div id="vscroll"></div><div id="vthumb"></div>
<svg class="a" style="left:1349px;top:275px" width="8" height="6" viewBox="0 0 8 6"><path d="M0 5 L4 0.8 L8 5 Z" fill="#505050"/></svg>
<svg class="a" style="left:1349px;top:552px" width="8" height="6" viewBox="0 0 8 6"><path d="M0 0.2 L4 4.4 L8 0.2 Z" fill="#a3a3a3"/></svg>
<div id="hscroll"></div><div id="hthumb"></div><div id="corner"></div>
<svg class="a" style="left:1335px;top:567px" width="6" height="9" viewBox="0 0 6 9"><path d="M0 0.5 L4.2 4.3 L0 8.1 Z" fill="#505050"/></svg>
<svg class="a" style="left:209px;top:567px" width="6" height="9" viewBox="0 0 6 9"><path d="M5 0.5 L0.8 4.3 L5 8.1 Z" fill="#a3a3a3"/></svg>
</body></html>
